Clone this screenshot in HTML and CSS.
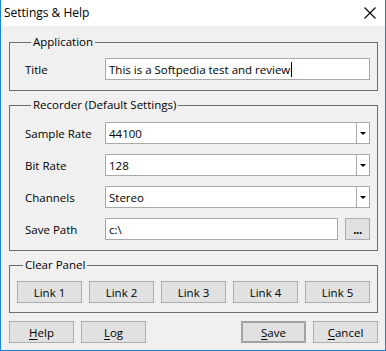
FILE: index.html
```html
<!DOCTYPE html>
<html lang="en">
<head>
  <meta charset="UTF-8">
  <title>Settings &amp; Help</title>
  <link rel="stylesheet" href="styles.css">
</head>
<body>
  <div class="window">
    <div class="titlebar">
      <span class="caption">Settings &amp; Help</span>
      <!-- close glyph -->
      <svg class="close" viewBox="0 0 12 12" width="12" height="12">
        <path d="M0.5 0.5 L11.5 11.5 M11.5 0.5 L0.5 11.5" stroke="#000" stroke-width="1.1" fill="none"/>
      </svg>
    </div>

    <div class="content">
      <fieldset class="group">
        <legend>Application</legend>
        <div class="row">
          <label>Title</label>
          <div class="field">This is a Softpedia test and review<span class="caret"></span></div>
        </div>
      </fieldset>

      <fieldset class="group">
        <legend>Recorder (Default Settings)</legend>
        <div class="rows">
          <div class="row">
            <label>Sample Rate</label>
            <div class="field combo"><span class="value">44100</span><span class="drop"><i class="arrow"></i></span></div>
          </div>
          <div class="row">
            <label>Bit Rate</label>
            <div class="field combo"><span class="value">128</span><span class="drop"><i class="arrow"></i></span></div>
          </div>
          <div class="row">
            <label>Channels</label>
            <div class="field combo"><span class="value">Stereo</span><span class="drop"><i class="arrow"></i></span></div>
          </div>
          <div class="row">
            <label>Save Path</label>
            <div class="field path">c:\</div>
            <button class="btn browse">...</button>
          </div>
        </div>
      </fieldset>

      <fieldset class="group links">
        <legend>Clear Panel</legend>
        <div class="link-row">
          <button class="btn">Link 1</button>
          <button class="btn">Link 2</button>
          <button class="btn">Link 3</button>
          <button class="btn">Link 4</button>
          <button class="btn">Link 5</button>
        </div>
      </fieldset>

      <div class="footer">
        <div class="footer-side">
          <button class="btn"><u>H</u>elp</button>
          <button class="btn"><u>L</u>og</button>
        </div>
        <div class="footer-side">
          <button class="btn default"><u>S</u>ave</button>
          <button class="btn"><u>C</u>ancel</button>
        </div>
      </div>
    </div>
  </div>
</body>
</html>
```

FILE: styles.css
```css
*, *::before, *::after {
  margin: 0;
  padding: 0;
  box-sizing: border-box;
}

body {
  font-family: "Open Sans", "Noto Sans", sans-serif;
  font-size: 11.5px;
  color: #000;
  background: #fff;
}

.window {
  width: 386px;
  height: 351px;
  border: 1px solid #1883d7;
  border-top: none;
  background: #f0f0f0;
  display: flex;
  flex-direction: column;
}

.titlebar {
  height: 26px;
  background: #fff;
  display: flex;
  align-items: center;
  justify-content: space-between;
  padding: 0 9px 1px 3px;
  font-size: 12px;
}

.close {
  display: block;
}

.content {
  padding: 8px 7px 0 8px;
  display: flex;
  flex-direction: column;
}

.group {
  border: 1px solid #6e6e6e;
  padding: 8px 7px 10px 15px;
  margin-bottom: 6px;
}

.group legend {
  margin-left: 6px;
  padding: 0 2px;
  line-height: 16px;
}

.rows {
  display: flex;
  flex-direction: column;
  gap: 10px;
  padding-top: 1px;
}

.row {
  display: flex;
  align-items: center;
}

.row label {
  width: 80px;
  flex: none;
}

.field {
  flex: 1;
  height: 22px;
  background: #fff;
  border: 1px solid #a9a9a9;
  display: flex;
  align-items: center;
  padding-left: 3px;
  white-space: nowrap;
}

.caret {
  display: inline-block;
  width: 1px;
  height: 15px;
  background: #000;
  margin-left: 1px;
}

.combo .value {
  flex: 1;
}

.drop {
  width: 13px;
  height: 100%;
  border-left: 1px solid #a9a9a9;
  display: flex;
  align-items: center;
  justify-content: center;
}

.arrow {
  width: 0;
  height: 0;
  border-left: 3px solid transparent;
  border-right: 3px solid transparent;
  border-top: 3px solid #000;
}

.path {
  margin-right: 7px;
}

.btn {
  font: inherit;
  color: #000;
  background: #e1e1e1;
  border: 1px solid #adadad;
  height: 22px;
  width: 65px;
  display: flex;
  align-items: center;
  justify-content: center;
}

.btn u {
  text-underline-offset: 2px;
}

.btn.browse {
  width: 25px;
  flex: none;
  font-weight: bold;
  letter-spacing: -0.5px;
}

.btn.default {
  border: 2px solid #a3a3a3;
}

.links {
  padding: 8px 7px 9px 7px;
  margin-bottom: 8px;
}

.link-row {
  display: flex;
  gap: 7px;
}

.footer {
  display: flex;
  justify-content: space-between;
}

.footer-side {
  display: flex;
  gap: 7px;
}
```
